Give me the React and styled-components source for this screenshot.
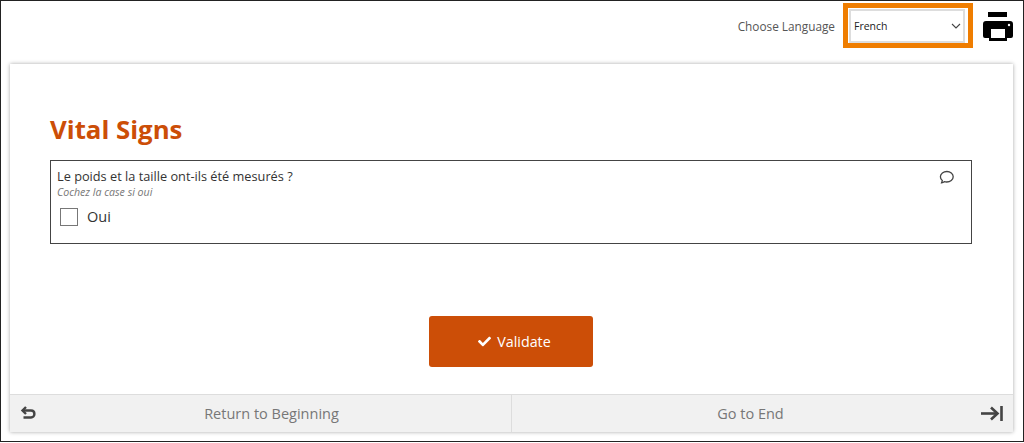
import React from 'react';
import styled, { createGlobalStyle } from 'styled-components';
import { FaCheck } from 'react-icons/fa';

const GlobalStyle = createGlobalStyle`
  html, body {
    margin: 0;
    padding: 0;
    background: #fff;
    font-family: "Open Sans", "Liberation Sans", sans-serif;
  }
  * { box-sizing: border-box; }
`;

const Frame = styled.div`
  width: 1024px;
  height: 442px;
  border: 1px solid #222;
  background: #fff;
  display: flex;
  flex-direction: column;
  padding: 0 9px 9px 9px;
`;

const TopBar = styled.header`
  height: 63px;
  flex: none;
  display: flex;
  justify-content: flex-end;
  align-items: flex-start;
  padding-top: 2px;
`;

const LanguageLabel = styled.label`
  font-size: 11.8px;
  color: #555;
  line-height: 46px;
  margin-right: 8px;
`;

const Highlight = styled.div`
  width: 130px;
  height: 45px;
  border: 5px solid #ef7d00;
  padding: 1px 3px 0 1px;
  display: flex;
`;

const LanguageSelect = styled.div`
  flex: 1;
  border: 2px solid #ddd;
  display: flex;
  align-items: center;
  justify-content: space-between;
  padding: 0 2px 0 3px;
  font-size: 10.5px;
  color: #222;
`;

const PrintButton = styled.div`
  width: 32px;
  margin-left: 9px;
  padding-top: 9px;
  display: flex;
  svg { display: block; }
`;

const Card = styled.main`
  flex: 1;
  background: #fff;
  display: flex;
  flex-direction: column;
  box-shadow: 0 0 4px rgba(0, 0, 0, 0.35);
  margin-right: 1px;
`;

const Body = styled.section`
  flex: 1;
  display: flex;
  flex-direction: column;
  padding: 46px 41px 0 40px;
`;

const Title = styled.h1`
  margin: 0 0 12px;
  font-size: 25.8px;
  line-height: 38px;
  font-weight: 700;
  color: #cc4e07;
`;

const QuestionBox = styled.div`
  position: relative;
  height: 84px;
  border: 1px solid #444;
  padding: 7px 6px 0;
`;

const QuestionText = styled.div`
  font-size: 12.75px;
  line-height: 17px;
  color: #333;
`;

const Hint = styled.div`
  font-size: 10.6px;
  line-height: 14px;
  font-style: italic;
  color: #777;
`;

const CheckRow = styled.div`
  display: flex;
  align-items: center;
  gap: 9px;
  margin: 8px 0 0 3px;
`;

const CheckBox = styled.span`
  width: 18px;
  height: 18px;
  border: 1px solid #777;
  background: #fff;
`;

const CheckLabel = styled.span`
  font-size: 14.5px;
  line-height: 20px;
  color: #333;
`;

const CommentIcon = styled.svg`
  position: absolute;
  top: 9px;
  right: 16px;
`;

const Actions = styled.div`
  display: flex;
  justify-content: center;
  margin-top: 72px;
`;

const ValidateButton = styled.button`
  width: 164px;
  height: 51px;
  border: none;
  border-radius: 3px;
  background: #cc4e07;
  color: #fff;
  font-family: inherit;
  font-size: 14.3px;
  display: flex;
  align-items: center;
  justify-content: center;
  gap: 6px;
  padding: 0 0 0 7px;
`;

const Footer = styled.footer`
  height: 38px;
  flex: none;
  display: grid;
  grid-template-columns: 501px 1fr;
  background: #f1f1f1;
  border-top: 1px solid #ddd;
`;

const FooterLink = styled.div`
  position: relative;
  display: flex;
  align-items: center;
  justify-content: center;
  font-size: 14.5px;
  color: #777;
  ${(props) => props.$divider && 'border-left: 1px solid #ddd; padding-right: 24px;'}
  ${(props) => !props.$divider && 'padding-left: 22px;'}
`;

const FooterIcon = styled.svg`
  position: absolute;
  top: 10px;
  ${(props) => (props.$side === 'left' ? 'left: 10px;' : 'right: 10px;')}
`;

export default function App() {
  return (
    <>
      <GlobalStyle />
      <Frame>
        <TopBar>
          <LanguageLabel>Choose Language</LanguageLabel>
          <Highlight>
            <LanguageSelect>
              French
              <svg width="10" height="6" viewBox="0 0 10 6" fill="none" stroke="#444" strokeWidth="1.1">
                <path d="M1 1l4 4 4-4" />
              </svg>
            </LanguageSelect>
          </Highlight>
          <PrintButton>
            <svg width="32" height="29" viewBox="0 0 32 29">
              <rect x="6" y="0" width="19" height="5" fill="#000" />
              <path
                d="M4 9h24a3 3 0 0 1 3 3v12a2 2 0 0 1-2 2h-4v3H7v-3H3a2 2 0 0 1-2-2V12a3 3 0 0 1 3-3z"
                fill="#000"
              />
              <rect x="9" y="17" width="14" height="9" fill="#fff" />
              <circle cx="27" cy="13" r="1.2" fill="#fff" />
            </svg>
          </PrintButton>
        </TopBar>
        <Card>
          <Body>
            <Title>Vital Signs</Title>
            <QuestionBox>
              <QuestionText>Le poids et la taille ont-ils été mesurés ?</QuestionText>
              <Hint>Cochez la case si oui</Hint>
              <CheckRow>
                <CheckBox />
                <CheckLabel>Oui</CheckLabel>
              </CheckRow>
              <CommentIcon width="16" height="14" viewBox="0 0 16 14" fill="none" stroke="#444" strokeWidth="1.3">
                <path d="M2.6 12.8c.9-.1 1.9-.5 2.6-1.1.8.2 1.6.3 2.5.3 3.6 0 6.5-2.2 6.5-5.2S11.3 1.5 7.9 1.5 1.4 3.7 1.4 6.8c0 1.6.7 2.9 1.9 3.8-.1.8-.4 1.5-.7 2.2z" />
              </CommentIcon>
            </QuestionBox>
            <Actions>
              <ValidateButton>
                <FaCheck size={13} />
                Validate
              </ValidateButton>
            </Actions>
          </Body>
          <Footer>
            <FooterLink>
              <FooterIcon $side="left" width="17" height="17" viewBox="0 0 17 17" fill="none" stroke="#444" strokeWidth="2.4">
                <path d="M6 2L2.5 5.5 6 9" />
                <path d="M3 5.5h8c2 0 3.4 1.4 3.4 3.4S13 12.5 11 12.5H3.5" />
              </FooterIcon>
              Return to Beginning
            </FooterLink>
            <FooterLink $divider>
              Go to End
              <FooterIcon $side="right" width="22" height="17" viewBox="0 0 22 17" fill="none" stroke="#444" strokeWidth="2.6">
                <path d="M0 8.5h16" />
                <path d="M10 2.5l6.5 6-6.5 6" />
                <path d="M20.5 1v15" />
              </FooterIcon>
            </FooterLink>
          </Footer>
        </Card>
      </Frame>
    </>
  );
}
